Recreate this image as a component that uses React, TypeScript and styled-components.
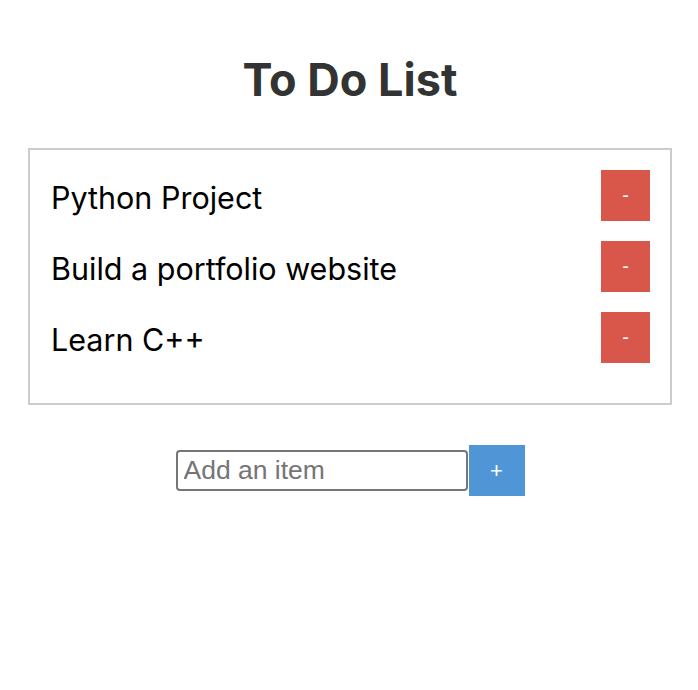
import styled, { createGlobalStyle } from 'styled-components';

const GlobalStyle = createGlobalStyle`
    body {
        margin: 0;
        background: #ffffff;
        font-family: Inter, 'Liberation Sans', Arial, sans-serif;
    }
`;

const Page = styled.div`
    padding: 0 26px 0 28px;
`;

const Title = styled.h1`
    margin: 0 0 44px;
    padding-top: 56px;
    text-align: center;
    font-family: Inter, 'Liberation Sans', sans-serif;
    font-size: 45px;
    font-weight: 700;
    line-height: 48px;
    color: #333333;
`;

const ListBox = styled.ul`
    list-style: none;
    margin: 0;
    padding: 20px 20px 40px 21px;
    border: 2px solid #cccccc;
    display: flex;
    flex-direction: column;
    gap: 20px;
`;

const Row = styled.li`
    display: flex;
    align-items: center;
    justify-content: space-between;
    height: 51px;
`;

const ItemText = styled.span`
    font-family: Inter, 'Liberation Sans', sans-serif;
    font-size: 30.5px;
    color: #000000;
    padding-top: 3px;
`;

const RemoveButton = styled.button`
    width: 49px;
    height: 51px;
    border: none;
    padding: 0;
    background: #d9574a;
    color: #ffffff;
    font-size: 20px;
    font-family: 'Liberation Sans', Arial, sans-serif;
    cursor: pointer;
`;

const AddForm = styled.form`
    display: flex;
    justify-content: center;
    align-items: center;
    margin-top: 40px;
`;

const ItemInput = styled.input`
    width: 292px;
    height: 41px;
    box-sizing: border-box;
    border: 2px solid #767676;
    border-radius: 4px;
    padding: 0 6px;
    font-size: 26.5px;
    font-family: 'Liberation Sans', Arial, sans-serif;

    &::placeholder {
        color: #757575;
    }
`;

const AddButton = styled.button`
    width: 56px;
    height: 51px;
    margin-left: 1px;
    border: none;
    background: #5096d6;
    color: #ffffff;
    font-size: 22px;
    font-family: 'Liberation Sans', Arial, sans-serif;
    cursor: pointer;
`;

const items = ['Python Project', 'Build a portfolio website', 'Learn C++'];

export default function App() {
    return (
        <>
            <GlobalStyle />
            <Page>
                <Title>To Do List</Title>
                <ListBox>
                    {items.map((item) => (
                        <Row key={item}>
                            <ItemText>{item}</ItemText>
                            <RemoveButton type='button'>-</RemoveButton>
                        </Row>
                    ))}
                </ListBox>
                <AddForm onSubmit={(e) => e.preventDefault()}>
                    <ItemInput placeholder='Add an item' />
                    <AddButton type='submit'>+</AddButton>
                </AddForm>
            </Page>
        </>
    );
}
